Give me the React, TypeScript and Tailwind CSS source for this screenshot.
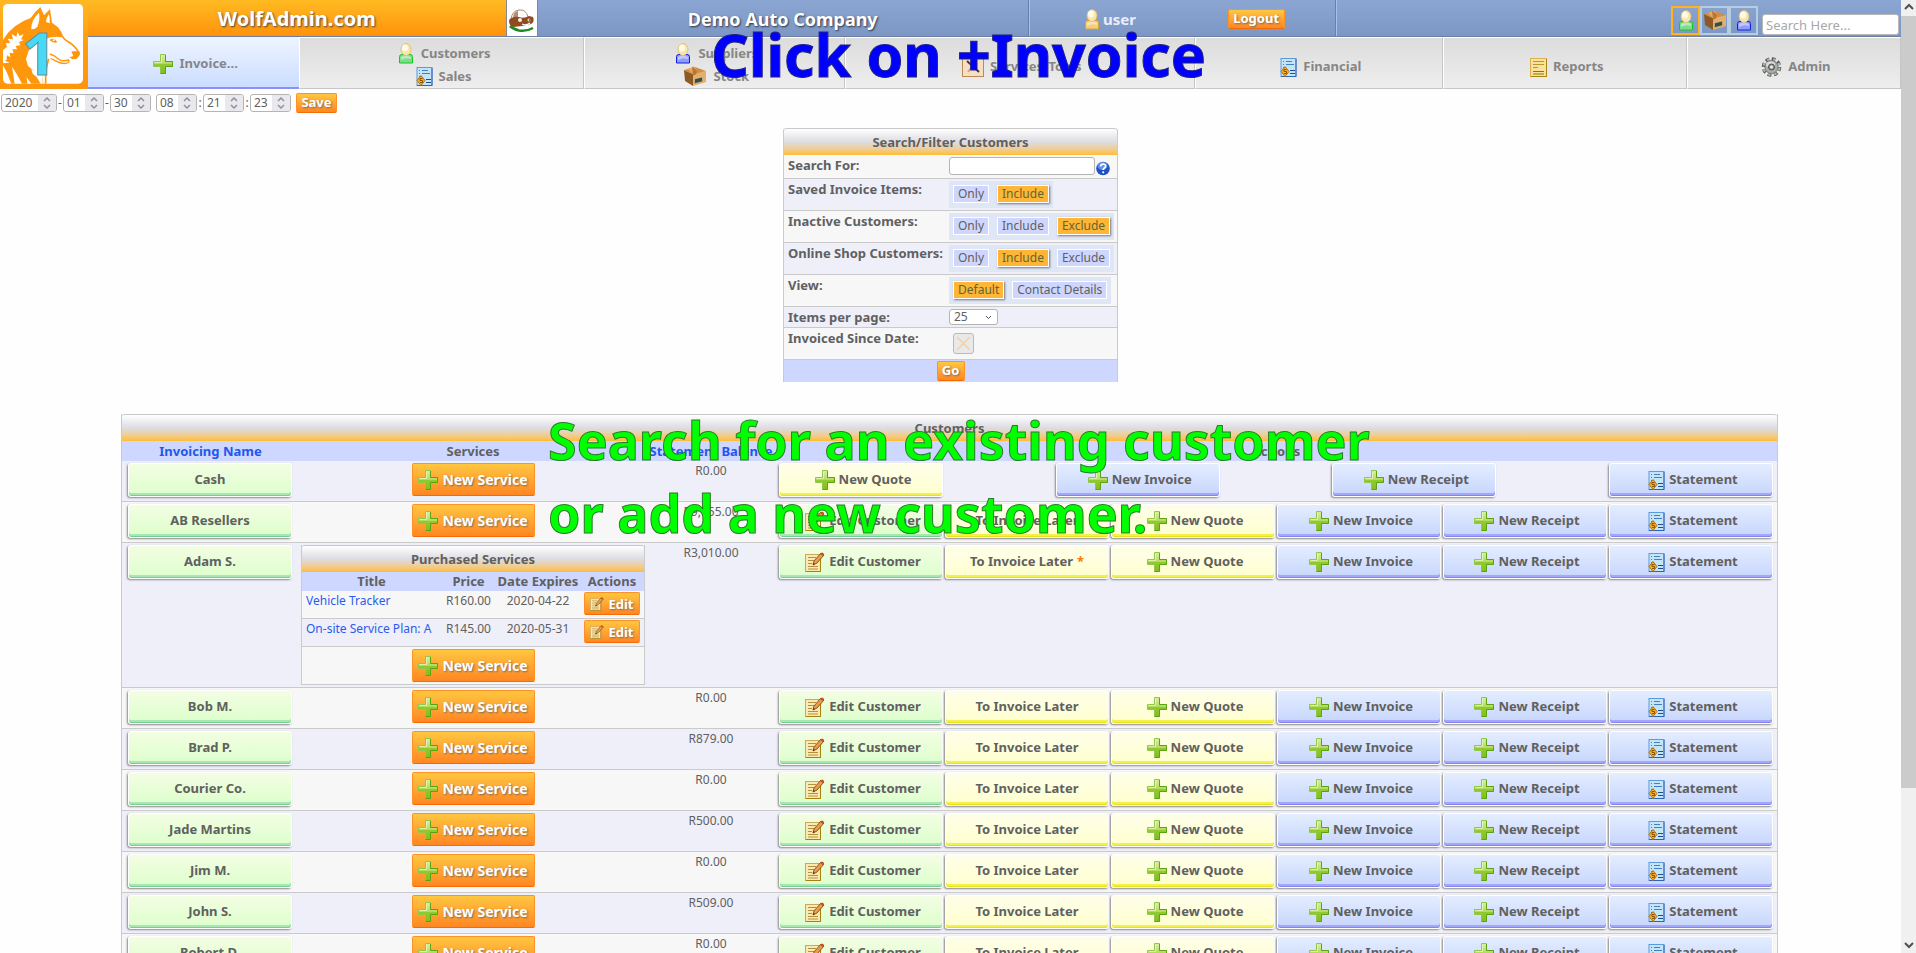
import { useState } from "react";
import type { ReactNode } from "react";

const PlusIcon = ({ size = 20 }: { size?: number }) => (
  <svg width={size} height={size} viewBox="0 0 20 20" className="shrink-0">
    <defs>
      <linearGradient id="plus" x1="0" y1="0" x2="0" y2="1">
        <stop offset="0" stopColor="#d9efa6" />
        <stop offset="0.48" stopColor="#b5da62" />
        <stop offset="0.52" stopColor="#93c92e" />
        <stop offset="1" stopColor="#7fc01a" />
      </linearGradient>
    </defs>
    <path
      d="M7.500 .5h5v7h7v5h-7v7h-5v-7h-7v-5h7z"
      fill="url(#plus)"
      stroke="#8fc84a"
    />
    <path d="M12.500 1v6.500h7v5h-7v7h-5" fill="none" stroke="#5aa312" />
    <path d="M8.500 1.500v7h-7" fill="none" stroke="#f2ffd4" opacity="0.600" />
  </svg>
);

const PersonIcon = ({
  shirt,
  line,
}: {
  shirt: string;
  line: string;
}) => (
  <svg width="18" height="21" viewBox="0 0 18 21" className="shrink-0">
    <path
      d="M2.500 20v-6.500q0-2 2.500-2h8q2.500 0 2.500 2V20z"
      fill={shirt}
      stroke={line}
    />
    <path d="M4 14q5-3 10 0v2q-5-2-10 1z" fill="#fff" opacity="0.45" />
    <ellipse cx="9" cy="6.500" rx="5" ry="6" fill="#f9e6ae" stroke="#dfb96a" strokeWidth="0.800" />
    <ellipse cx="8" cy="5" rx="3" ry="3.500" fill="#fffbe8" />
  </svg>
);

const LedgerIcon = () => (
  <svg width="17" height="19" viewBox="0 0 17 19" className="shrink-0">
    <rect x="1" y=".5" width="15" height="18" fill="#c4e4f8" stroke="#5e9ad8" />
    <path d="M16 1v17.500H1" fill="none" stroke="#2f63b5" />
    <path d="M3 3.500h1M6 3.500h6M3 6.500h1M6 6.500h8M3 9.500h3" stroke="#3f80c8" />
    <path d="M10 12.500h5M10 15.500h5" stroke="#1d4c94" />
    <path d="M5 8.500l4 5-4 5-4-5z" fill="#f6b02a" stroke="#b67208" />
    <path d="M6.500 11.500H4v2h2.500v2H4" fill="none" stroke="#8a5200" />
  </svg>
);

const BoxIcon = () => (
  <svg width="24" height="21" viewBox="0 0 24 21" className="shrink-0">
    <path d="M1 4l9 4v12L2 15z" fill="#8d5a25" />
    <path d="M10 8l13-3v11l-13 4z" fill="#e3af6b" />
    <path d="M1 4L12 1l11 4-13 3.500z" fill="#cf8f45" />
    <path d="M5 3l6-2.500 3 3.500-4 4z" fill="#e9a95e" />
    <path d="M9 .5l5 4-1 4-3 1z" fill="#b97636" />
    <path d="M11.500 13l8-2v4.500l-8 2.200z" fill="#3d4a3c" stroke="#d9c59b" strokeWidth="0.600" />
  </svg>
);

const PageIcon = () => (
  <svg width="17" height="19" viewBox="0 0 17 19" className="shrink-0">
    <rect x=".5" y=".5" width="16" height="18" fill="#f9e29a" stroke="#dcb050" />
    <path d="M16.500 1v17.500H1" fill="none" stroke="#a9820f" />
    <path d="M3 3.500h11M3 6.500h11M3 9.500h5" stroke="#bd9230" />
    <path d="M3 13.500h11M3 16h11" stroke="#8d7409" />
  </svg>
);

const EditIcon = ({ size = 20 }: { size?: number }) => (
  <svg width={size} height={size} viewBox="0 0 20 20" className="shrink-0">
    <rect x=".5" y="2.500" width="15" height="17" fill="#fbe9b4" stroke="#cfa758" />
    <path d="M15.500 3v16.500H1" fill="none" stroke="#a8800f" />
    <path d="M3 5.500h8M3 8.500h6M3 11.500h4M3 14.500h10M3 17h10" stroke="#b3923b" />
    <path d="M8 13l1-4 7-8 3 2-7 8z" fill="#e5a04b" stroke="#8c4413" strokeWidth="0.900" />
    <path d="M16.500 1.500l2 1.500" stroke="#c94f1c" strokeWidth="2.500" />
    <path d="M8 13l.5-2 1.500 1z" fill="#333" />
  </svg>
);

const ToolsIcon = () => (
  <svg width="22" height="22" viewBox="0 0 22 22" className="shrink-0">
    <rect x=".5" y=".5" width="21" height="20" fill="#f8dfc4" stroke="#b98b55" />
    <path d="M5 5l12 11" stroke="#3a3a3a" strokeWidth="2" />
    <path d="M15 4l-9 12" stroke="#c9a77e" strokeWidth="2" />
  </svg>
);

const GearIcon = () => (
  <svg width="21" height="20" viewBox="0 0 20 20" className="shrink-0">
    <circle cx="10" cy="10" r="8" fill="none" stroke="#5b5f5b" strokeWidth="3.600" strokeDasharray="3.800 2.483" />
    <circle cx="10" cy="10" r="7.800" fill="none" stroke="#b4b7b4" strokeWidth="2.400" strokeDasharray="2.400 3.883" strokeDashoffset="-.7" />
    <circle cx="10" cy="10" r="6.600" fill="#a9aca9" stroke="#676b67" strokeWidth="0.800" />
    <ellipse cx="9" cy="7.500" rx="4.500" ry="3" fill="#e4e6e4" opacity="0.800" />
    <circle cx="10" cy="10" r="3" fill="#8d918d" stroke="#4f534f" />
    <circle cx="10" cy="10" r="1.500" fill="#eee" />
  </svg>
);

const WolfLogo = () => (
  <svg width="88" height="89" viewBox="0 0 264 267" className="block">
    <rect x="9" y="12" width="240" height="239" rx="14" fill="#fff" />
    {/* head, back and chest */}
    <path
      d="M9 120L24 98 46 78 72 62 92 54 106 36 121 21 132 46 150 27 156 68 174 82 184 96 186 112 170 110 152 112 140 116 118 122 100 134 86 152 78 178 84 198 106 216 128 228 130 251H94L80 232 82 251H66L50 222 36 200 44 251H34L20 216 9 196z"
      fill="#ff970c"
    />
    <path d="M94 88q-2-26 23-50q4 20-5 42q-6 8-18 8z" fill="#fff" />
    <path d="M138 66q1-14 9-24q3 14 2 28z" fill="#fff" />
    {/* fur tufts */}
    <path d="M9 150l12-10-4-10 14-2-8-12 16 2-4-16 14 8 4-14 6 12 12-6-8 16 8 2-14 6 4 10-14 2 4 10-14 0 4 12-12-2 2 14-10-6-2 14-10-4z" fill="#fff" />
    <path d="M9 168l12 10-6 4 14 6-20 2z" fill="#fff" />
    {/* eye, muzzle and jaw */}
    <path d="M148 120q14-10 24 6q-10 6-24-6z" fill="#ff970c" />
    <circle cx="161" cy="121" r="3" fill="#fff" />
    <path d="M182 98q6 18 24 28t32 34" stroke="#ff970c" strokeWidth="5" fill="none" />
    <path d="M214 154l24 0 2 10-10 12-12 2-10-6 12-4z" fill="#ff970c" />
    <path d="M150 162q14 4 24 14t32 4q4 8-8 10t-28-6-18-8" stroke="#ff970c" strokeWidth="4" fill="none" />
    <path d="M146 176q-8 24-9 50v25" stroke="#ff970c" strokeWidth="5" fill="none" />
    <path d="M94 208l22 12 12 8v23h-6l-12-20-12-10z" fill="#fff" />
  </svg>
);

const CarLogo = () => (
  <svg width="30" height="36" viewBox="0 0 30 36" className="block">
    <path d="M4 19q1-8 8-9q7-1 9 7" fill="#fff" stroke="#a98a74" />
    <path d="M6 18q0-6 5-7v7z" fill="#b98c70" />
    <path d="M2 20q4-4 10-3q5 2 10-1l4 1q2 5-2 7l-9 2-9 1Q2 26 2 20z" fill="#8f4a1e" />
    <circle cx="13" cy="20" r="2" fill="#f4efe8" />
    <circle cx="22" cy="20" r="1.500" fill="#eee" />
    <circle cx="22.500" cy="20" r=".8" fill="#222" />
    <path d="M3 26q3 3 9 4.500q8 1 14-2.500" stroke="#1f8a25" strokeWidth="2.500" fill="none" />
    <path d="M15 24q4 2 8-1" stroke="#fff" strokeWidth="1.200" fill="none" />
  </svg>
);

const HelpIcon = () => (
  <svg width="14" height="15" viewBox="0 0 14 15" className="mt-1">
    <circle cx="7" cy="7.500" r="6.800" fill="#1c50c8" />
    <ellipse cx="6.500" cy="5" rx="5" ry="4" fill="#79abf2" opacity="0.700" />
    <path d="M4.500 5.500q.3-2.300 2.600-2.300t2.500 2q0 1.300-1.500 2.100-.9.600-.9 1.700" stroke="#fff" strokeWidth="1.700" fill="none" />
    <circle cx="7.200" cy="11.300" r="1.100" fill="#fff" />
  </svg>
);

const ORANGE =
  "inline-flex items-center justify-center rounded-[2px] border border-[#ff9226] border-b-[#f76a08] bg-linear-to-b from-[#ffc640] via-[#ffa733] to-[#ff8622] font-bold text-white [text-shadow:1px_1px_2px_#7a6a58]";

const TONES = {
  green:
    "from-[#f3fde3] to-[#dcffcb] shadow-[inset_0_-1px_0_#76cf92,inset_0_-3px_0_#a8e6b4,-1px_1px_2px_#888]",
  yellow:
    "from-[#fefeea] to-[#ffffcc] shadow-[inset_0_-1px_0_#e8e21c,inset_0_-3px_0_#f3f04e,-1px_1px_2px_#888]",
  blue: "from-[#e4edff] to-[#c6d5fc] shadow-[inset_0_-1px_0_#8585f2,inset_0_-3px_0_#a3a6fb,-1px_1px_2px_#888]",
};

const TileButton = ({
  tone,
  icon,
  children,
}: {
  tone: keyof typeof TONES;
  icon?: ReactNode;
  children: ReactNode;
}) => (
  <button
    className={`flex h-[34px] w-[164px] items-center justify-center gap-1 rounded-[3px] border border-white bg-linear-to-b text-[13px] font-bold ${icon ? "pl-1" : ""} ${TONES[tone]}`}>
    {icon}
    {children}
  </button>
);

const NewService = () => (
  <button className={`${ORANGE} h-[33px] w-[123px] gap-1 align-top text-[14px]`}>
    <PlusIcon />
    New Service
  </button>
);

const PanelTitle = ({ children }: { children: ReactNode }) => (
  <h2 className="flex h-[27px] items-center justify-center rounded-t-[3px] border-t border-[#c8c8c8] bg-linear-to-b from-white via-[#dcdce2] via-50% to-[#ffbd2c] pt-[2px] text-[13px] font-bold">
    <span>{children}</span>
  </h2>
);

const NumberBox = ({
  label,
  value,
  wide,
}: {
  label: string;
  value: string;
  wide?: boolean;
}) => (
  <span
    className={`flex h-[18px] items-center overflow-hidden rounded-[3px] border border-[#b4b4b4] bg-white ${wide ? "w-[56px]" : "w-[41px]"}`}>
    <input
      type="number"
      aria-label={label}
      defaultValue={value}
      className="w-0 min-w-0 flex-1 pl-[3px] text-[12px] outline-none [appearance:textfield] [&::-webkit-inner-spin-button]:appearance-none"
    />
    <span className="flex h-full w-[18px] items-center justify-center bg-[#e9e9ed]">
      <svg width="8" height="14" viewBox="0 0 8 14">
        <path d="M1 5l3-3 3 3M1 9l3 3 3-3" fill="none" stroke="#8f8f9d" strokeWidth="1.500" />
      </svg>
    </span>
  </span>
);

const FilterRow = ({
  label,
  height,
  shaded,
  htmlFor,
  children,
}: {
  label: string;
  height: string;
  shaded?: boolean;
  htmlFor?: string;
  children: ReactNode;
}) => (
  <div
    className={`flex border-x border-b border-[#cacaca] ${height} ${shaded ? "bg-[#efeff9]" : "bg-[#f7f7f7]"}`}>
    <label htmlFor={htmlFor} className="w-[165px] shrink-0 pt-[2px] pl-1 text-[13px] leading-4 font-bold">
      {label}
    </label>
    <div className="pt-[2px]">{children}</div>
  </div>
);

const Toggle = ({
  name,
  options,
  initial,
}: {
  name: string;
  options: string[];
  initial: string;
}) => {
  const [value, setValue] = useState(initial);
  return (
    <div role="radiogroup" aria-label={name} className="flex h-[27px] gap-2 bg-[#dfe6f6] px-1 pt-1">
      {options.map((option) => (
        <label key={option} className="relative">
          <input
            type="radio"
            name={name}
            checked={value === option}
            onChange={() => setValue(option)}
            className="peer sr-only"
          />
          <span className="block border border-white bg-[#ced6fe] px-1 text-[12px] leading-4 peer-checked:bg-[#ffb637] peer-checked:text-[#62652e] peer-checked:shadow-[1px_1px_2px_#777]">
            {option}
          </span>
        </label>
      ))}
    </div>
  );
};

const NAV: { grow: string; items: { label: string; icon: ReactNode }[] }[] = [
  {
    grow: "flex-[285] pt-1",
    items: [
      { label: "Customers", icon: <PersonIcon shirt="#7fdc8d" line="#12cc1c" /> },
      { label: "Sales", icon: <LedgerIcon /> },
    ],
  },
  {
    grow: "flex-[261] pt-1",
    items: [
      { label: "Suppliers", icon: <PersonIcon shirt="#8f9cff" line="#1420d8" /> },
      { label: "Stock", icon: <BoxIcon /> },
    ],
  },
  { grow: "flex-[351] pt-2", items: [{ label: "Services/Tools", icon: <ToolsIcon /> }] },
  { grow: "flex-[248] pt-2", items: [{ label: "Financial", icon: <LedgerIcon /> }] },
  { grow: "flex-[244] pt-2", items: [{ label: "Reports", icon: <PageIcon /> }] },
  { grow: "flex-[214] pt-2", items: [{ label: "Admin", icon: <GearIcon /> }] },
];

const CUSTOMERS = [
  { name: "Cash", balance: "R0.00" },
  { name: "AB Resellers", balance: "R9,155.00" },
  { name: "Adam S.", balance: "R3,010.00", pending: true },
  { name: "Bob M.", balance: "R0.00" },
  { name: "Brad P.", balance: "R879.00" },
  { name: "Courier Co.", balance: "R0.00" },
  { name: "Jade Martins", balance: "R500.00" },
  { name: "Jim M.", balance: "R0.00" },
  { name: "John S.", balance: "R509.00" },
  { name: "Robert D.", balance: "R0.00" },
];

const SERVICES = [
  { title: "Vehicle Tracker", price: "R160.00", expires: "2020-04-22" },
  { title: "On-site Service Plan: A", price: "R145.00", expires: "2020-05-31" },
];

const PurchasedServices = () => (
  <div className="mx-[2px] mb-[2px] border-x border-b border-[#cacaca]">
    <PanelTitle>Purchased Services</PanelTitle>
    <table className="w-full table-fixed border-separate border-spacing-0 text-center">
      <colgroup>
        <col />
        <col className="w-[55px]" />
        <col className="w-[84px]" />
        <col className="w-[64px]" />
      </colgroup>
      <thead>
        <tr className="h-[19px] bg-[#ced7ff] text-[13px] leading-[19px]">
          <th>Title</th>
          <th>Price</th>
          <th className="whitespace-nowrap">Date Expires</th>
          <th>Actions</th>
        </tr>
      </thead>
      <tbody>
        {SERVICES.map((s) => (
          <tr
            key={s.title}
            className="h-[28px] bg-[#f7f7f7] align-top text-[12px] leading-5 even:bg-[#efeff9] [&>td]:border-b [&>td]:border-[#cacaca]">
            <td className="pl-1 text-left whitespace-nowrap">
              <a href="#service" className="text-[#2a5bef]">
                {s.title}
              </a>
            </td>
            <td>{s.price}</td>
            <td>{s.expires}</td>
            <td className="pt-px">
              <button className={`${ORANGE} h-[23px] w-[56px] gap-1 align-top text-[13px]`}>
                <EditIcon size={14} />
                Edit
              </button>
            </td>
          </tr>
        ))}
      </tbody>
    </table>
    <div className="flex h-[37px] justify-center bg-[#f7f7f7] pt-[2px]">
      <NewService />
    </div>
  </div>
);

const Header = () => (
  <header className="relative flex h-[89px]">
    <a href="#home" aria-label="WolfAdmin.com" className="w-[88px] shrink-0 bg-linear-to-b from-[#ffb822] via-[#ff9d10] to-[#ff950a]">
      <WolfLogo />
    </a>
    <div className="flex min-w-0 flex-1 flex-col">
      <div className="flex h-[39px] border-b border-[#6d7fa4] bg-linear-to-b from-[#8ba6d3] to-[#7c97c4] text-white">
        <div className="flex flex-[418] items-center justify-center bg-linear-to-b from-[#ffba22] to-[#ff9209] pt-[2px]">
          <h1 className="text-[20px] font-bold [text-shadow:1px_1px_2px_#444]">WolfAdmin.com</h1>
        </div>
        <div className="w-[32px] shrink-0 border-x border-[#888] bg-white">
          <CarLogo />
        </div>
        <div className="flex flex-[491] items-center justify-center border-r border-[#6480b4] pt-[2px]">
          <span className="text-[18px] font-bold [text-shadow:1px_1px_2px_#334]">Demo Auto Company</span>
        </div>
        <div className="flex-[305] border-r border-l border-r-[#6480b4] border-l-[#a9c0ec]">
          <div className="flex h-full items-center justify-between pt-[2px] pr-[50px] pl-[53px]">
            <a href="#user" className="flex items-center gap-[2px] text-[15px] font-bold text-[#e8eefa]">
              <PersonIcon shirt="#f3cf78" line="#dba33a" />
              user
            </a>
            <button className={`${ORANGE} h-[20px] w-[57px] text-[13px]`}>Logout</button>
          </div>
        </div>
        <div className="flex-[565] border-l border-[#a9c0ec]">
          <div className="flex items-start justify-end pt-[6px] pr-[2px]">
            <button aria-label="Customers" className="flex h-[29px] w-[29px] items-center justify-center border-2 border-[#ffb31c]">
              <PersonIcon shirt="#7fdc8d" line="#12cc1c" />
            </button>
            <button aria-label="Stock" className="flex h-[29px] w-[29px] items-center justify-center border-2 border-[#b5cde0]">
              <BoxIcon />
            </button>
            <button aria-label="Suppliers" className="flex h-[29px] w-[29px] items-center justify-center border-2 border-[#b5cde0]">
              <PersonIcon shirt="#8f9cff" line="#1420d8" />
            </button>
            <input
              type="search"
              aria-label="Search"
              placeholder="Search Here..."
              className="mt-2 ml-1 h-[21px] w-[137px] rounded-[3px] border border-[#b8b8b8] bg-white px-[3px] text-[13px] text-gray-700 placeholder:text-[#a9a9a9]"
            />
          </div>
        </div>
      </div>
      <nav className="flex flex-1 text-[13px] font-bold text-[#868686]">
        <a
          href="#invoice"
          className="flex flex-[209] items-center justify-center gap-[6px] border-b-2 border-[#8c90fa] bg-linear-to-b from-[#eef5ff] to-[#cbdcff] pt-1 pl-1">
          <PlusIcon />
          Invoice...
        </a>
        {NAV.map((group) => (
          <div
            key={group.items[0].label}
            className={`flex flex-col items-center justify-center border-t border-r border-b border-l border-t-white border-r-[#c6c6c6] border-b-[#c6c6c6] border-l-white bg-linear-to-b from-[#dcdcdc] to-[#eeeeee] ${group.grow}`}>
            {group.items.map((item) => (
              <a key={item.label} href="#menu" className="flex h-[23px] items-center gap-[6px] pl-1">
                {item.icon}
                {item.label}
              </a>
            ))}
          </div>
        ))}
      </nav>
    </div>
    <span className="absolute top-[22px] left-[22px] text-[60px] leading-[60px] font-bold text-[#48d9f6] [-webkit-text-stroke:1px_#5c8f9c]">
      1
    </span>
    <p className="absolute top-[21px] left-[711px] text-[59px] leading-[66px] font-bold whitespace-nowrap text-[#0000ff] [-webkit-text-stroke:1px_#23237c]">
      Click on +Invoice
    </p>
  </header>
);

const FilterPanel = () => (
  <form className="mx-auto w-[335px]" onSubmit={(e) => e.preventDefault()}>
    <div className="rounded-t-[3px] border-x border-[#cacaca]">
      <PanelTitle>Search/Filter Customers</PanelTitle>
    </div>
    <FilterRow label="Search For:" height="h-[24px]" htmlFor="search-for">
      <span className="flex items-start gap-px">
        <input id="search-for" type="text" className="h-[18px] w-[146px] rounded-[3px] border border-[#b4b4b4] bg-white px-1 text-[12px]" />
        <HelpIcon />
      </span>
    </FilterRow>
    <FilterRow label="Saved Invoice Items:" height="h-[32px]" shaded>
      <Toggle name="Saved Invoice Items" options={["Only", "Include"]} initial="Include" />
    </FilterRow>
    <FilterRow label="Inactive Customers:" height="h-[32px]">
      <Toggle name="Inactive Customers" options={["Only", "Include", "Exclude"]} initial="Exclude" />
    </FilterRow>
    <FilterRow label="Online Shop Customers:" height="h-[32px]" shaded>
      <Toggle name="Online Shop Customers" options={["Only", "Include", "Exclude"]} initial="Include" />
    </FilterRow>
    <FilterRow label="View:" height="h-[32px]">
      <Toggle name="View" options={["Default", "Contact Details"]} initial="Default" />
    </FilterRow>
    <FilterRow label="Items per page:" height="h-[21px]" htmlFor="per-page" shaded>
      <span className="relative block">
        <select id="per-page" className="block h-[16px] w-[49px] appearance-none rounded-[3px] border border-[#b4b4b4] bg-white pl-1 text-[12px] leading-[14px]">
          <option>25</option>
          <option>50</option>
          <option>100</option>
        </select>
        <svg width="7" height="5" viewBox="0 0 7 5" className="pointer-events-none absolute top-[6px] right-[6px]">
          <path d="M1 1l2.500 2.500L6 1" fill="none" stroke="#555" />
        </svg>
      </span>
    </FilterRow>
    <FilterRow label="Invoiced Since Date:" height="h-[32px]" htmlFor="since">
      <span className="relative mt-[3px] ml-1 block h-[21px] w-[21px]">
        <input id="since" type="checkbox" disabled className="block h-[21px] w-[21px] appearance-none rounded-[3px] border border-[#b9b9b9] bg-[#e9e9e9]" />
        <svg width="21" height="21" viewBox="0 0 21 21" className="pointer-events-none absolute inset-0">
          <path d="M4 4l13 13M17 4L4 17" stroke="#f0d2a4" strokeWidth="1.500" />
        </svg>
      </span>
    </FilterRow>
    <div className="flex h-[22px] justify-center border-x border-[#cacaca] bg-[#ced7ff] pt-px">
      <button className={`${ORANGE} h-[20px] w-[28px] text-[13px]`}>Go</button>
    </div>
  </form>
);

const App = () => {
  return (
    <div className="flex h-screen overflow-hidden bg-[#fefefe] font-['Noto_Sans',sans-serif] text-[#606060]">
      <main className="min-w-0 flex-1 overflow-hidden">
        <Header />
        <form className="flex h-[27px] items-center pl-px text-[12px]" onSubmit={(e) => e.preventDefault()}>
          <NumberBox label="Year" value="2020" wide />
          <span className="w-[6px] text-center">-</span>
          <NumberBox label="Month" value="01" />
          <span className="w-[6px] text-center">-</span>
          <NumberBox label="Day" value="30" />
          <span className="w-[5px]" />
          <NumberBox label="Hour" value="08" />
          <span className="w-[6px] text-center">:</span>
          <NumberBox label="Minute" value="21" />
          <span className="w-[6px] text-center">:</span>
          <NumberBox label="Second" value="23" />
          <button className={`${ORANGE} ml-[5px] h-[20px] w-[41px] text-[13px]`}>Save</button>
        </form>
        <div className="pt-3">
          <FilterPanel />
        </div>

        <section className="relative mr-[123px] ml-[121px] mt-8 border-x border-[#cacaca]">
          <PanelTitle>Customers</PanelTitle>
          <table className="w-full table-fixed border-separate border-spacing-0 text-center">
            <colgroup>
              <col className="w-[177px]" />
              <col className="w-[348px]" />
              <col className="w-[128px]" />
              <col />
            </colgroup>
            <thead>
              <tr className="h-[20px] bg-[#ced7ff] text-[13px] leading-[20px]">
                <th>
                  <a href="#name" className="text-[#2257ee]">Invoicing Name</a>
                </th>
                <th>Services</th>
                <th className="whitespace-nowrap">
                  <a href="#balance" className="text-[#2257ee]">Statement Balance</a>
                </th>
                <th>Actions</th>
              </tr>
            </thead>
            <tbody>
              {CUSTOMERS.map((c) => (
                <tr
                  key={c.name}
                  className="h-[41px] bg-[#f7f7f7] align-top odd:bg-[#efeff9] [&>td]:border-b [&>td]:border-[#cacaca]">
                  <td className="pt-[2px] pl-[6px]">
                    <TileButton tone="green">{c.name}</TileButton>
                  </td>
                  <td className="pt-[2px]">{c.pending ? <PurchasedServices /> : <NewService />}</td>
                  <td className="text-[12px] leading-5">{c.balance}</td>
                  <td className="pt-[2px]">
                    <div className="flex justify-between pr-1 pl-1">
                      {c.name !== "Cash" && (
                        <>
                          <TileButton tone="green" icon={<EditIcon />}>Edit Customer</TileButton>
                          <TileButton tone="yellow">
                            To Invoice Later {c.pending && <span className="text-[#f77a10]">*</span>}
                          </TileButton>
                        </>
                      )}
                      <TileButton tone="yellow" icon={<PlusIcon />}>New Quote</TileButton>
                      <TileButton tone="blue" icon={<PlusIcon />}>New Invoice</TileButton>
                      <TileButton tone="blue" icon={<PlusIcon />}>New Receipt</TileButton>
                      <TileButton tone="blue" icon={<LedgerIcon />}>Statement</TileButton>
                    </div>
                  </td>
                </tr>
              ))}
            </tbody>
          </table>
          <p className="absolute -top-[11px] left-[426px] text-[52px] leading-[73px] font-bold whitespace-nowrap text-[#00ff00] [-webkit-text-stroke:1px_#2c7a2c]">
            Search for an existing customer
            <br />
            or add a new customer.
          </p>
        </section>
      </main>

      <div className="flex w-[15px] shrink-0 flex-col bg-[#f0f0f0]">
        <svg width="15" height="16" viewBox="0 0 15 16">
          <path d="M4 9l4-4 4 4" fill="none" stroke="#505050" strokeWidth="2" />
        </svg>
        <div className="h-[81%] bg-[#cbcbcb]" />
        <svg width="15" height="16" viewBox="0 0 15 16" className="mt-auto">
          <path d="M4 6l4 4 4-4" fill="none" stroke="#505050" strokeWidth="2" />
        </svg>
      </div>
    </div>
  );
};

export default App;
